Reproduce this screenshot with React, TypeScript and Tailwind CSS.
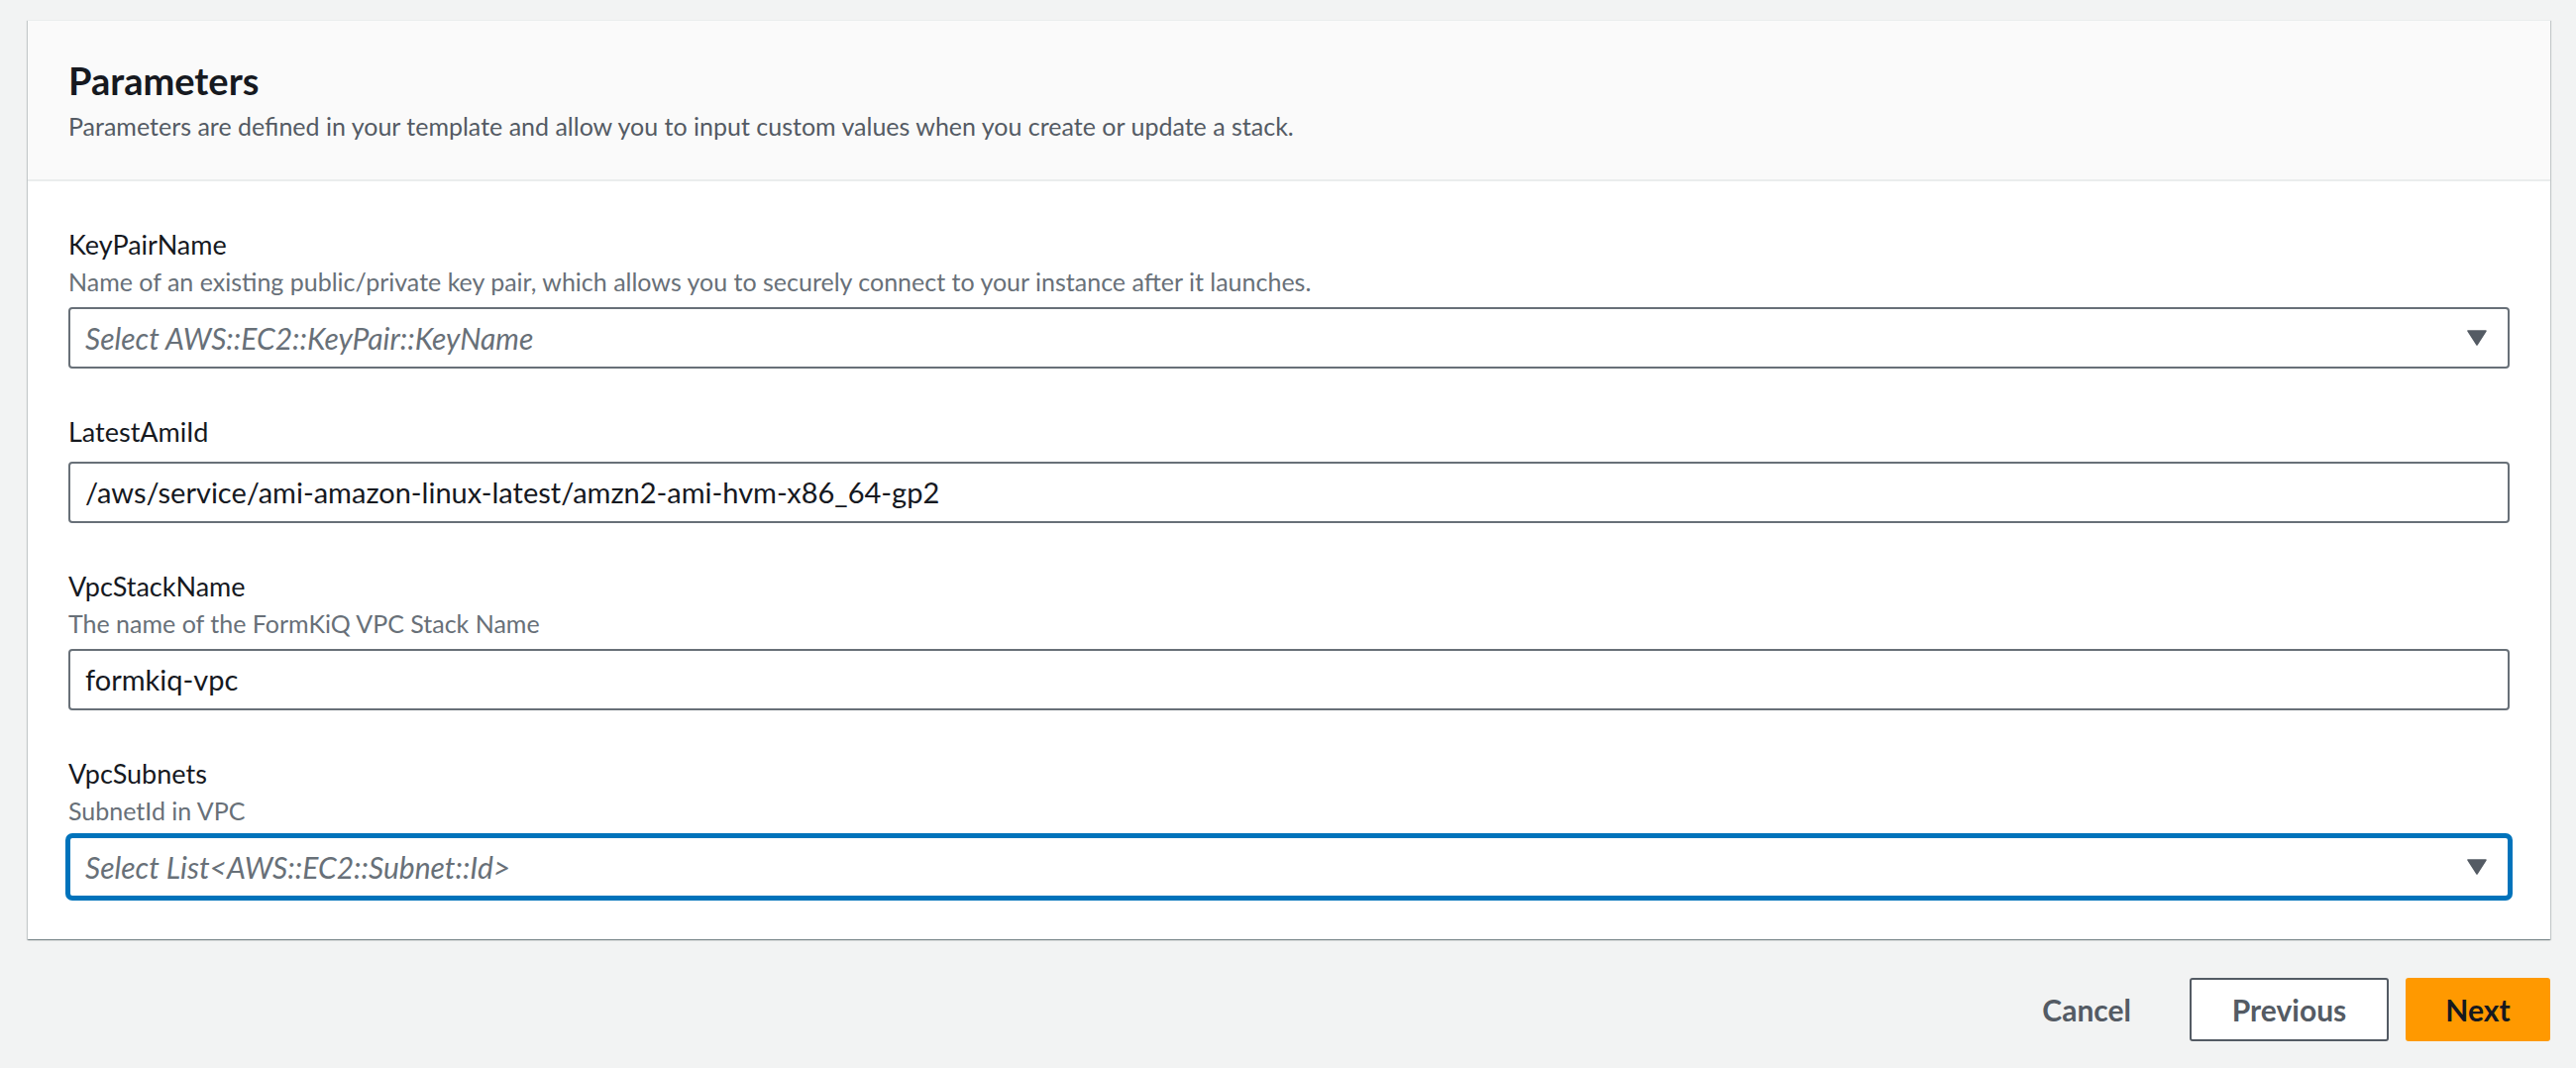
import { ReactNode } from 'react'

const font = { fontFamily: 'Lato, "Open Sans", sans-serif' }

function Caret() {
  return (
    <svg width="20" height="16" viewBox="0 0 20 16" className="shrink-0">
      <path d="M1 1 H19 L10 15 Z" fill="#545b64" stroke="#545b64" strokeWidth="1.5" strokeLinejoin="round" />
    </svg>
  )
}

function Field({ label, desc, children }: { label: string; desc?: string; children: ReactNode }) {
  return (
    <div>
      <div className="text-[27px] leading-[32px] text-[#16191f]">{label}</div>
      {desc ? (
        <>
          <div className="mt-[5px] text-[25px] leading-[32px] text-[#687078]">{desc}</div>
          <div className="mt-[10px]">{children}</div>
        </>
      ) : (
        <div className="mt-[14px]">{children}</div>
      )}
    </div>
  )
}

function SelectBox({ placeholder, focused }: { placeholder: string; focused?: boolean }) {
  return (
    <div
      className={`flex h-[62px] items-center justify-between rounded-[4px] border-2 bg-white pl-[15px] pr-[21px] ${
        focused ? 'border-[#0073bb] ring-[3px] ring-[#0073bb]' : 'border-[#687078]'
      }`}
    >
      <span className="text-[30px] italic text-[#687078]">{placeholder}</span>
      <Caret />
    </div>
  )
}

function TextBox({ value }: { value: string }) {
  return (
    <div className="flex h-[62px] items-center rounded-[4px] border-2 border-[#687078] bg-white px-[15px]">
      <span className="text-[29px] text-[#16191f]">{value}</span>
    </div>
  )
}

export default function App() {
  return (
    <div className="min-h-[1078px] bg-[#f2f3f3] pt-[20px] pl-[28px] pr-[26px]" style={font}>
      {/* Parameters container */}
      <div className="bg-white shadow-[0_1px_1px_0_rgba(0,28,36,0.3),1px_1px_1px_0_rgba(0,28,36,0.15),-1px_1px_1px_0_rgba(0,28,36,0.15)]">
        <div className="border-t border-b-2 border-t-[#eaeded] border-b-[#eaeded] bg-[#fafafa] px-[41px] pt-[38px] pb-[38px]">
          <h2 className="text-[38px] font-bold leading-[44px] text-[#16191f]">Parameters</h2>
          <p className="mt-[8px] text-[25px] leading-[32px] text-[#545b64]">
            Parameters are defined in your template and allow you to input custom values when you create or update a stack.
          </p>
        </div>

        <div className="flex flex-col gap-[48px] px-[41px] pt-[48px] pb-[42px]">
          <Field
            label="KeyPairName"
            desc="Name of an existing public/private key pair, which allows you to securely connect to your instance after it launches."
          >
            <SelectBox placeholder="Select AWS::EC2::KeyPair::KeyName" />
          </Field>
          <Field label="LatestAmiId">
            <TextBox value="/aws/service/ami-amazon-linux-latest/amzn2-ami-hvm-x86_64-gp2" />
          </Field>
          <Field label="VpcStackName" desc="The name of the FormKiQ VPC Stack Name">
            <TextBox value="formkiq-vpc" />
          </Field>
          <Field label="VpcSubnets" desc="SubnetId in VPC">
            <SelectBox placeholder="Select List<AWS::EC2::Subnet::Id>" focused />
          </Field>
        </div>
      </div>

      {/* Wizard actions */}
      <div className="mt-[39px] flex items-center justify-end gap-[17px]">
        <button className="mr-[12px] h-[64px] px-[30px] text-[30px] font-bold text-[#545b64]">Cancel</button>
        <button className="h-[64px] w-[201px] rounded-[3px] border-2 border-[#545b64] bg-white text-[30px] font-bold text-[#545b64]">
          Previous
        </button>
        <button className="h-[64px] w-[146px] rounded-[3px] bg-[#ff9900] text-[30px] font-bold text-[#16191f]">
          Next
        </button>
      </div>
    </div>
  )
}
